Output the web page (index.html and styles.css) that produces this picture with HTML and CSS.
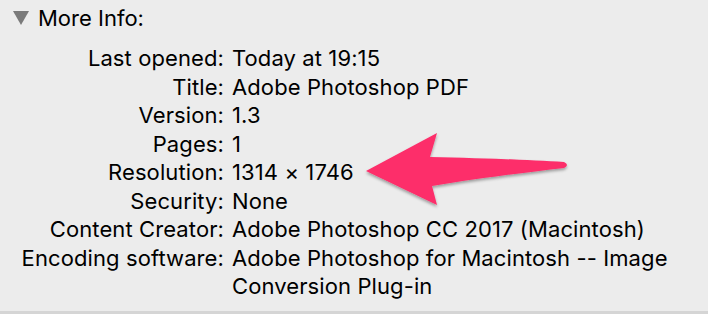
FILE: index.html
```html
<!DOCTYPE html>
<html lang="en">
<head>
  <meta charset="UTF-8">
  <meta name="viewport" content="width=device-width, initial-scale=1.0">
  <title>More Info</title>
  <link rel="stylesheet" href="styles.css">
</head>
<body>
  <div class="panel">
    <div class="header">
      <span class="disclosure"></span>
      <span class="header-title">More Info:</span>
    </div>
    <div class="info">
      <div class="label">Last opened:</div>
      <div class="value">Today at 19:15</div>

      <div class="label">Title:</div>
      <div class="value">Adobe Photoshop PDF</div>

      <div class="label">Version:</div>
      <div class="value">1.3</div>

      <div class="label">Pages:</div>
      <div class="value">1</div>

      <div class="label">Resolution:</div>
      <div class="value">1314 × 1746</div>

      <div class="label">Security:</div>
      <div class="value">None</div>

      <div class="label">Content Creator:</div>
      <div class="value">Adobe Photoshop CC 2017 (Macintosh)</div>

      <div class="label">Encoding software:</div>
      <div class="value">Adobe Photoshop for Macintosh -- Image Conversion Plug-in</div>
    </div>

    <!-- annotation arrow pointing at the resolution -->
    <svg class="arrow" width="708" height="314" viewBox="0 0 708 314">
      <defs>
        <filter id="shadow" x="-10%" y="-30%" width="120%" height="160%">
          <feDropShadow dx="0" dy="2" stdDeviation="1.5" flood-color="#000" flood-opacity="0.35"/>
        </filter>
      </defs>
      <path d="M366 171 L437 133 L430 157 C480 158 530 160 564 162 Q570 165 564 168 C530 172 480 178 432 186 L437 205 Z" fill="#fd2d6a" filter="url(#shadow)"/>
    </svg>
  </div>
</body>
</html>
```

FILE: styles.css
```css
body {
  margin: 0;
  background: #ececec;
  font-family: Inter, "Helvetica Neue", "Liberation Sans", sans-serif;
  color: #000;
}
.panel {
  position: relative;
  width: 708px;
  height: 314px;
  box-sizing: border-box;
  border-bottom: 3px solid #d5d5d5;
  overflow: hidden;
}
.header {
  display: flex;
  align-items: center;
  gap: 9px;
  padding: 5px 0 0 13px;
  height: 26px;
  font-size: 22px;
}
.disclosure {
  width: 0;
  height: 0;
  border-left: 8px solid transparent;
  border-right: 8px solid transparent;
  border-top: 14px solid #7a7a7a;
}
.info {
  display: grid;
  grid-template-columns: 224px 470px;
  column-gap: 8px;
  margin-top: 13px;
  font-size: 22px;
  line-height: 28.5px;
  letter-spacing: 0.1px;
}
.label {
  text-align: right;
}
.arrow {
  position: absolute;
  left: 0;
  top: 0;
}
```
